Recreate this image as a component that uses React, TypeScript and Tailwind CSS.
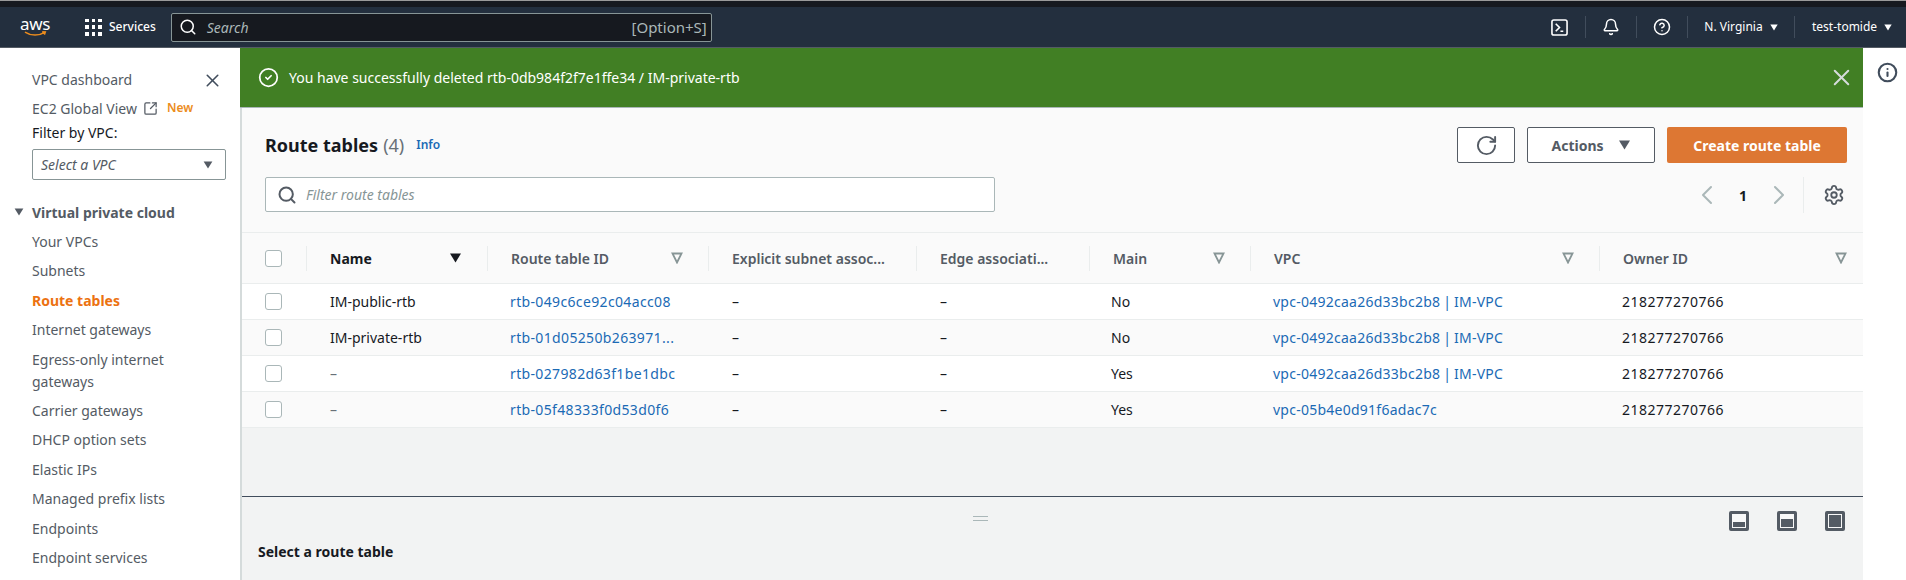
import { Bell, ChevronLeft, ChevronRight, CircleCheck, CircleHelp, Info, RotateCw, Search, Settings, SquareArrowOutUpRight, X } from "lucide-react";

const font = "font-['Noto_Sans','Open_Sans',sans-serif]";

const navItems = ["Your VPCs", "Subnets", "Route tables", "Internet gateways", "Egress-only internet gateways", "Carrier gateways", "DHCP option sets", "Elastic IPs", "Managed prefix lists", "Endpoints", "Endpoint services"];

const columns = [
  { label: "Name", sort: "active", dark: true },
  { label: "Route table ID", sort: "idle" },
  { label: "Explicit subnet assoc...", sort: "" },
  { label: "Edge associati...", sort: "" },
  { label: "Main", sort: "idle" },
  { label: "VPC", sort: "idle" },
  { label: "Owner ID", sort: "idle" },
];

const imVpc = "vpc-0492caa26d33bc2b8 | IM-VPC";
const rows = [
  { name: "IM-public-rtb", id: "rtb-049c6ce92c04acc08", main: "No", vpc: imVpc },
  { name: "IM-private-rtb", id: "rtb-01d05250b263971...", main: "No", vpc: imVpc },
  { name: "–", id: "rtb-027982d63f1be1dbc", main: "Yes", vpc: imVpc },
  { name: "–", id: "rtb-05f48333f0d53d0f6", main: "Yes", vpc: "vpc-05b4e0d91f6adac7c" },
];

const grid = "grid grid-cols-[64px_181px_221px_208px_173px_161px_349px_1fr]";

function Caret({ className }: { className: string }) {
  return (
    <svg viewBox="0 0 12 10" className={className} fill="currentColor">
      <path d="M0.5 0.5h11L6 9.5z" />
    </svg>
  );
}

function SortIcon() {
  return (
    <svg viewBox="0 0 12 12" className="h-[12px] w-[12px] text-[#879596]" fill="none" stroke="currentColor" strokeWidth="1.8">
      <path d="M1.5 1.5h9L6 10.5z" />
    </svg>
  );
}

function Checkbox() {
  return <span className="block h-[17px] w-[17px] rounded-[3px] border border-[#aab7b8] bg-white" />;
}

function TerminalIcon() {
  return (
    <svg viewBox="0 0 18 18" className="h-[17px] w-[17px]" fill="none" stroke="white" strokeWidth="1.7">
      <rect x="1" y="1" width="16" height="16" rx="2" />
      <path d="M5 5l4 4-4 4M10 13h3" />
    </svg>
  );
}

function PanelIcon({ inner }: { inner: string }) {
  return (
    <span className="flex h-[20px] w-[20px] items-end justify-center rounded-[2px] border-[3px] border-[#545b64] bg-[#f8f8f8] p-[1px]">
      <span className={`w-full bg-[#545b64] ${inner}`} />
    </span>
  );
}

function TopBar() {
  return (
    <header className="shrink-0">
      <div className="h-[7px] border-t border-[#9a9a9a] bg-[#16191f]" />
      <div className="flex h-[41px] items-center border-b border-[#545b64] bg-[#232f3e] text-white">
        <div className="flex w-[58px] flex-col items-center pl-[12px]">
          <span className="text-[17px] leading-[14px] tracking-tight">aws</span>
          <svg viewBox="0 0 24 6" className="h-[6px] w-[23px]" fill="none" stroke="#ec8c1d" strokeWidth="1.5">
            <path d="M1 1c6 4 15 4 21 0M19 0.6l3.3 0.2-1 3" />
          </svg>
        </div>
        <div className="ml-[27px] grid h-[17px] w-[17px] grid-cols-3 gap-[3px]">
          {Array.from({ length: 9 }).map((_, i) => (
            <span key={i} className="bg-white" />
          ))}
        </div>
        <span className="ml-[7px] text-[12px] font-medium">Services</span>
        <div className="ml-[15px] flex h-[29px] w-[541px] items-center rounded-[2px] border border-[#879596] bg-[#16191f] pl-[7px] pr-[4px]">
          <Search className="h-[18px] w-[18px]" strokeWidth={2} />
          <span className="ml-[10px] text-[14px] italic text-[#aab7b8]">Search</span>
          <span className="ml-auto text-[15px] text-[#aab7b8]">[Option+S]</span>
        </div>
        <div className="ml-auto flex items-center pr-[11px]">
          <div className="flex h-[22px] w-[51px] items-center justify-center"><TerminalIcon /></div>
          <div className="flex h-[22px] w-[51px] items-center justify-center border-l border-[#414d5c]"><Bell className="h-[18px] w-[18px]" strokeWidth={2} /></div>
          <div className="flex h-[22px] w-[51px] items-center justify-center border-l border-[#414d5c]"><CircleHelp className="h-[18px] w-[18px]" strokeWidth={2} /></div>
          <div className="flex h-[22px] w-[107px] items-center justify-center gap-[7px] border-l border-[#414d5c] text-[12px]">
            N. Virginia <Caret className="h-[7px] w-[8px]" />
          </div>
          <div className="flex h-[22px] w-[101px] items-center gap-[7px] border-l border-[#414d5c] pl-[17px] text-[12px]">
            test-tomide <Caret className="h-[7px] w-[8px]" />
          </div>
        </div>
      </div>
    </header>
  );
}

function Sidebar() {
  return (
    <aside className="w-[240px] shrink-0 bg-white pl-[32px] pr-[14px] pt-[20px] text-[14px] text-[#545b64]">
      <div className="flex h-[22px] items-center justify-between">
        <span>VPC dashboard</span>
        <X className="mr-[3px] mt-[2px] h-[21px] w-[21px] text-[#414d5c]" strokeWidth={1.8} />
      </div>
      <div className="mt-[7px] flex h-[22px] items-center">
        <span>EC2 Global View</span>
        <SquareArrowOutUpRight className="ml-[6px] h-[15px] w-[15px]" strokeWidth={2} />
        <span className="ml-[9px] text-[12px] font-semibold text-[#ec8c1d]">New</span>
      </div>
      <div className="mt-[3px] h-[22px] leading-[22px] text-[#16191f]">Filter by VPC:</div>
      <div className="mt-[5px] flex h-[31px] items-center justify-between rounded-[2px] border border-[#879596] pl-[8px] pr-[12px] italic">
        <span>Select a VPC</span>
        <Caret className="h-[8px] w-[10px] text-[#545b64]" />
      </div>
      <div className="-ml-[18px] mt-[21px] flex h-[22px] items-center gap-[8px] font-bold">
        <Caret className="h-[8px] w-[10px]" />
        <span>Virtual private cloud</span>
      </div>
      <ul className="mt-[8px] flex flex-col gap-[7.4px]">
        {navItems.map((item) => (
          <li key={item} className={item === "Route tables" ? "font-bold leading-[22px] text-[#ec7211]" : "leading-[22px]"}>
            {item}
          </li>
        ))}
      </ul>
    </aside>
  );
}

function RouteTable() {
  return (
    <div className="text-[14px]">
      <div className={`${grid} h-[52px] items-center border-y border-[#eaeded] bg-[#fafafa]`}>
        <div className="pl-[23px]"><Checkbox /></div>
        {columns.map((c, i) => (
          <div key={c.label} className={`flex h-[25px] items-center justify-between border-l border-[#eaeded] pl-[23px] ${i === 6 ? "pr-[16px]" : "pr-[25px]"} ${c.dark ? "font-bold text-[#16191f]" : "font-semibold text-[#545b64]"}`}>
            <span className="whitespace-nowrap">{c.label}</span>
            {c.sort === "active" && <Caret className="h-[10px] w-[13px] text-[#16191f]" />}
            {c.sort === "idle" && <SortIcon />}
          </div>
        ))}
      </div>
      {rows.map((r, i) => (
        <div key={r.id} className={`${grid} h-[36px] items-center border-b border-[#eaeded] ${i % 2 ? "bg-[#fafafa]" : "bg-white"}`}>
          <div className="pl-[23px]"><Checkbox /></div>
          <div className={`pl-[24px] ${r.name === "–" ? "text-[#687078]" : "text-[#16191f]"}`}>{r.name}</div>
          <div className="pl-[23px] tracking-[0.35px] text-[#1b6ab5]">{r.id}</div>
          <div className="pl-[24px] text-[#16191f]">–</div>
          <div className="pl-[24px] text-[#16191f]">–</div>
          <div className="pl-[22px] text-[#16191f]">{r.main}</div>
          <div className="pl-[23px] tracking-[0.25px] [word-spacing:-1px] text-[#1b6ab5]">{r.vpc}</div>
          <div className="pl-[23px] tracking-[0.5px] text-[#16191f]">218277270766</div>
        </div>
      ))}
    </div>
  );
}

function Main() {
  return (
    <main className="flex min-w-0 flex-1 flex-col bg-[#f2f3f3]">
      <div className="flex h-[60px] shrink-0 items-center border-b border-[#aab7b8] bg-[#417f24] pl-[18px] pr-[8px] text-[14px] text-white">
        <CircleCheck className="h-[21px] w-[21px]" strokeWidth={2} />
        <span className="ml-[10px]">You have successfully deleted rtb-0db984f2f7e1ffe34 / IM-private-rtb</span>
        <X className="ml-auto h-[27px] w-[27px] text-[#d5dbdb]" strokeWidth={1.8} />
      </div>
      <div className="flex min-h-0 flex-1 flex-col border-l-[2px] border-[#d5dbdb]">
        <section className="bg-[#fafafa]">
          <div className="flex h-[124px] pl-[23px] pr-[16px] pt-[19px]">
            <div className="flex-1">
              <div className="mt-[1px] flex h-[34px] items-center">
                <span className="text-[18px] font-bold text-[#16191f]">Route tables</span>
                <span className="ml-[5px] text-[18px] text-[#687078]">(4)</span>
                <span className="ml-[12px] text-[12px] font-semibold text-[#1b6ab5]">Info</span>
              </div>
              <div className="mt-[15px] flex h-[35px] w-[730px] items-center rounded-[2px] border border-[#aab7b8] bg-white pl-[11px]">
                <Search className="h-[20px] w-[20px] text-[#545b64]" strokeWidth={2.4} />
                <span className="ml-[9px] italic text-[14px] text-[#879596]">Filter route tables</span>
              </div>
            </div>
            <div className="flex flex-col items-end">
              <div className="flex h-[36px] gap-[12px]">
                <div className="flex w-[58px] items-center justify-center rounded-[2px] border border-[#545b64] bg-white"><RotateCw className="h-[23px] w-[23px] text-[#545b64]" strokeWidth={2} /></div>
                <div className="flex w-[128px] items-center justify-center gap-[14px] rounded-[2px] border border-[#545b64] bg-white text-[14px] font-bold text-[#545b64]">
                  Actions <Caret className="h-[10px] w-[13px]" />
                </div>
                <div className="flex w-[180px] items-center justify-center rounded-[2px] bg-[#dd7733] text-[14px] font-bold text-white">Create route table</div>
              </div>
              <div className="mt-[14px] flex h-[36px] items-center">
                <ChevronLeft className="h-[32px] w-[32px] text-[#aab7b8]" strokeWidth={1.5} />
                <span className="mx-[16px] text-[14px] font-bold text-[#16191f]">1</span>
                <ChevronRight className="h-[32px] w-[32px] text-[#aab7b8]" strokeWidth={1.5} />
                <div className="ml-[8px] flex h-[36px] items-center border-l border-[#eaeded] pl-[19px] pr-[2px]"><Settings className="h-[22px] w-[22px] text-[#545b64]" strokeWidth={2} /></div>
              </div>
            </div>
          </div>
          <RouteTable />
        </section>
        <div className="flex-1" />
        <div className="h-[84px] shrink-0 border-t-[1px] border-[#414d5c] bg-[#f2f3f3]">
          <div className="relative flex h-[44px] items-start justify-end gap-[28px] pr-[18px] pt-[14px]">
            <span className="absolute left-[731px] top-[19px] h-[5px] w-[15px] border-y border-[#aab7b8]" />
            <PanelIcon inner="h-[5px]" />
            <PanelIcon inner="h-[8px]" />
            <PanelIcon inner="h-full" />
          </div>
          <div className="pl-[16px] text-[14px] font-bold text-[#16191f]">Select a route table</div>
        </div>
      </div>
    </main>
  );
}

export default function App() {
  return (
    <div className={`${font} flex h-[580px] flex-col overflow-hidden bg-white`}>
      <TopBar />
      <div className="flex min-h-0 flex-1">
        <Sidebar />
        <Main />
        <aside className="w-[43px] shrink-0 bg-white pl-[14px] pt-[14px]">
          <Info className="h-[21px] w-[21px] text-[#414d5c]" strokeWidth={2.4} />
        </aside>
      </div>
    </div>
  );
}
